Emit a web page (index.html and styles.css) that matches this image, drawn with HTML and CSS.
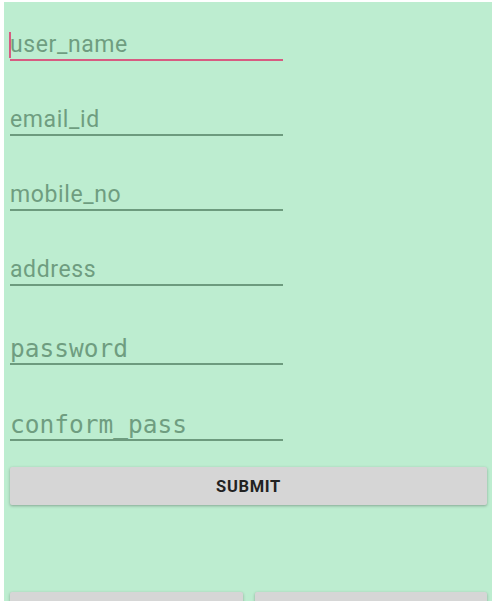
FILE: index.html
```html
<!DOCTYPE html>
<html>
<head>
<meta charset="utf-8">
<link rel="stylesheet" href="styles.css">
</head>
<body>
<div class="screen">
  <div class="form">
    <div class="field field-active f1"><span class="cursor"></span><span class="hint">user_name</span></div>
    <div class="field f2"><span class="hint">email_id</span></div>
    <div class="field f3"><span class="hint">mobile_no</span></div>
    <div class="field f4"><span class="hint">address</span></div>
    <div class="field f5"><span class="hint mono">password</span></div>
    <div class="field f6"><span class="hint mono">conform_pass</span></div>
  </div>
  <div class="btn submit">SUBMIT</div>
  <div class="bottom-row">
    <div class="btn half"></div>
    <div class="btn half"></div>
  </div>
</div>
</body>
</html>
```

FILE: styles.css
```css
html, body {
  margin: 0;
  padding: 0;
  background: #ffffff;
  overflow: hidden;
}
.screen {
  margin: 2px 4px 0 4px;
  height: 599px;
  background: #bdedd0;
  overflow: hidden;
  font-family: Roboto, "Noto Sans", sans-serif;
}
.form {
  padding-left: 6px;
  display: flex;
  flex-direction: column;
}
.field {
  position: relative;
  width: 273px;
  height: 40px;
  display: flex;
  align-items: flex-end;
  border-bottom: 2px solid #6d9b7e;
  box-sizing: content-box;
}
.field-active {
  border-bottom-color: #d75b81;
}
.f1 { margin-top: 17px; }
.f2, .f3, .f4 { margin-top: 33px; }
.f5 { margin-top: 37px; }
.f6 { margin-top: 34px; }
.hint {
  font-size: 23px;
  line-height: 24px;
  letter-spacing: 0.6px;
  padding-bottom: 2px;
  color: #6f9d80;
}
.mono {
  font-family: "DejaVu Sans Mono", "Liberation Mono", monospace;
  font-size: 24.5px;
  letter-spacing: 0;
}
.cursor {
  position: absolute;
  left: -1px;
  bottom: 1px;
  width: 2px;
  height: 26px;
  background: #d75b81;
}
.btn {
  background: #d6d6d6;
  border-radius: 2px;
  box-shadow: 0 1px 3px rgba(0, 0, 0, 0.3);
}
.submit {
  margin: 26px 5px 0 6px;
  height: 38px;
  display: flex;
  align-items: center;
  justify-content: center;
  font-size: 16.5px;
  font-weight: 700;
  letter-spacing: 0.04em;
  color: #222222;
}
.bottom-row {
  display: flex;
  gap: 12px;
  margin: 87px 5px 0 6px;
}
.half {
  flex: 1;
  height: 40px;
}
```
